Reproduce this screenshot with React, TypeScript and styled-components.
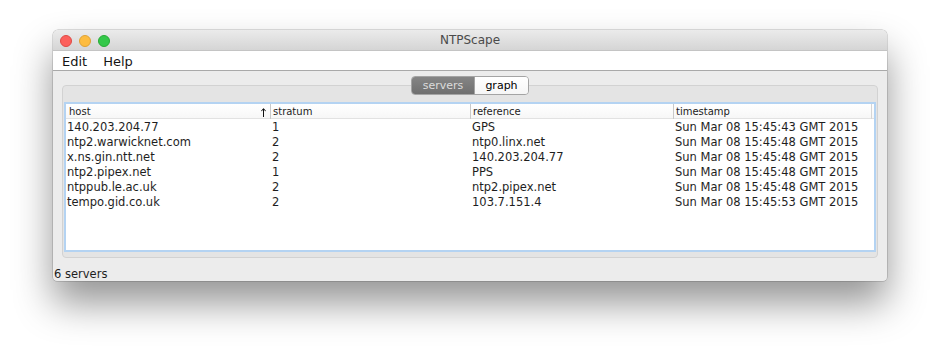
import styled, { createGlobalStyle } from 'styled-components'

const GlobalStyle = createGlobalStyle`
    html, body {
        margin: 0;
        padding: 0;
        background: #ffffff;
    }
    body {
        font-family: "DejaVu Sans", "Liberation Sans", sans-serif;
        width: 940px;
        height: 357px;
        overflow: hidden;
    }
`

const Desktop = styled.div`
    padding: 30px 0 0 53px;
`

const Window = styled.div`
    width: 834px;
    height: 251px;
    display: flex;
    flex-direction: column;
    border-radius: 5px 5px 4px 4px;
    overflow: hidden;
    background: #ececec;
    box-shadow: 0 22px 38px rgba(0, 0, 0, 0.42), 0 0 0 0.5px rgba(0, 0, 0, 0.25);
`

const TitleBar = styled.div`
    height: 21px;
    flex-shrink: 0;
    display: grid;
    grid-template-columns: 1fr auto 1fr;
    align-items: center;
    background: linear-gradient(#ebebeb, #d5d5d5);
    border-bottom: 1px solid #c4c4c4;
    box-sizing: border-box;
`

const Lights = styled.div`
    display: flex;
    gap: 7px;
    padding-left: 7px;
    padding-top: 1px;
`

interface LightProps {
    $fill: string;
    $edge: string;
}

const Light = styled.span<LightProps>`
    width: 12px;
    height: 12px;
    box-sizing: border-box;
    border-radius: 50%;
    background: ${p => p.$fill};
    border: 0.5px solid ${p => p.$edge};
`

const Title = styled.div`
    font-size: 12px;
    color: #4a4a4a;
    line-height: 21px;
`

const MenuBar = styled.div`
    height: 20px;
    flex-shrink: 0;
    box-sizing: border-box;
    display: flex;
    gap: 16px;
    padding-left: 9px;
    background: #ffffff;
    border-bottom: 1px solid #a9a9a9;
`

const MenuItem = styled.span`
    font-size: 13px;
    line-height: 21px;
    color: #151515;
`

const Content = styled.div`
    display: flex;
    flex-direction: column;
    padding: 5px 9px 0 9px;
`

const Segmented = styled.div`
    align-self: center;
    display: flex;
    height: 19px;
    box-sizing: border-box;
    border: 1px solid #a4a4a4;
    border-radius: 4px;
    overflow: hidden;
    position: relative;
    z-index: 1;
`

interface SegmentProps {
    $active?: boolean;
    $width: number;
}

const Segment = styled.div<SegmentProps>`
    width: ${p => p.$width}px;
    display: flex;
    align-items: center;
    justify-content: center;
    font-size: 11px;
    line-height: 17px;
    color: ${p => (p.$active ? '#dcdcdc' : '#000000')};
    background: ${p => (p.$active ? 'linear-gradient(#858585, #6f6f6f)' : 'linear-gradient(#ffffff, #f6f6f6)')};
    & + & {
        border-left: 1px solid #a4a4a4;
    }
`

const Panel = styled.div`
    margin-top: -10px;
    height: 173px;
    box-sizing: border-box;
    padding: 16px 1px 5px 1px;
    background: #e4e4e4;
    border: 1px solid #d2d2d2;
    border-radius: 4px;
`

const Table = styled.div`
    height: 150px;
    box-sizing: border-box;
    border: 2px solid #b4d3f2;
    background: #ffffff;
    display: flex;
    flex-direction: column;
`

const Row = styled.div`
    display: grid;
    grid-template-columns: 204px 200px 203px 1fr;
    height: 15px;
    flex-shrink: 0;
`

const HeaderRow = styled(Row)`
    background: linear-gradient(#ffffff, #f7f7f7);
    border-bottom: 1px solid #e2e2e2;
    box-sizing: border-box;
`

const HeaderCell = styled.div`
    display: flex;
    align-items: center;
    justify-content: space-between;
    font-size: 10px;
    line-height: 14px;
    color: #1c1c1c;
    padding: 1px 4px 0 3px;
    & + & {
        border-left: 1px solid #c9c9c9;
        padding-left: 2px;
    }
    &:last-child {
        border-right: 1px solid #d6d6d6;
        margin-right: 2px;
    }
`

const Cell = styled.div`
    font-size: 11.5px;
    line-height: 16px;
    color: #1e1e1e;
    padding-left: 1px;
    white-space: nowrap;
    & + & {
        padding-left: 2px;
    }
`

const Status = styled.div`
    font-size: 11.5px;
    line-height: 15px;
    color: #1e1e1e;
    padding: 9px 0 0 1px;
`

const SortArrow = () => (
    <svg width="5" height="9" viewBox="0 0 5 9">
        <path d="M2.5 1 V9" stroke="#111" strokeWidth="1" />
        <path d="M0.3 3.2 L2.5 0.6 L4.7 3.2" stroke="#111" strokeWidth="1" fill="none" />
    </svg>
)

const servers = [
    ['140.203.204.77', '1', 'GPS', 'Sun Mar 08 15:45:43 GMT 2015'],
    ['ntp2.warwicknet.com', '2', 'ntp0.linx.net', 'Sun Mar 08 15:45:48 GMT 2015'],
    ['x.ns.gin.ntt.net', '2', '140.203.204.77', 'Sun Mar 08 15:45:48 GMT 2015'],
    ['ntp2.pipex.net', '1', 'PPS', 'Sun Mar 08 15:45:48 GMT 2015'],
    ['ntppub.le.ac.uk', '2', 'ntp2.pipex.net', 'Sun Mar 08 15:45:48 GMT 2015'],
    ['tempo.gid.co.uk', '2', '103.7.151.4', 'Sun Mar 08 15:45:53 GMT 2015'],
]

function App() {
    return (
        <>
            <GlobalStyle/>
            <Desktop>
                <Window>
                    <TitleBar>
                        <Lights>
                            <Light $fill="#fc605c" $edge="#de4a45"/>
                            <Light $fill="#fdbc40" $edge="#dea236"/>
                            <Light $fill="#34c84a" $edge="#27aa35"/>
                        </Lights>
                        <Title>NTPScape</Title>
                        <span/>
                    </TitleBar>
                    <MenuBar>
                        <MenuItem>Edit</MenuItem>
                        <MenuItem>Help</MenuItem>
                    </MenuBar>
                    <Content>
                        <Segmented>
                            <Segment $active $width={62}>servers</Segment>
                            <Segment $width={53}>graph</Segment>
                        </Segmented>
                        <Panel>
                            <Table>
                                <HeaderRow>
                                    <HeaderCell>host<SortArrow/></HeaderCell>
                                    <HeaderCell>stratum</HeaderCell>
                                    <HeaderCell>reference</HeaderCell>
                                    <HeaderCell>timestamp</HeaderCell>
                                </HeaderRow>
                                {servers.map(s => (
                                    <Row key={s[0]}>
                                        {s.map((v, i) => <Cell key={i}>{v}</Cell>)}
                                    </Row>
                                ))}
                            </Table>
                        </Panel>
                    </Content>
                    <Status>6 servers</Status>
                </Window>
            </Desktop>
        </>
    )
}

export default App
